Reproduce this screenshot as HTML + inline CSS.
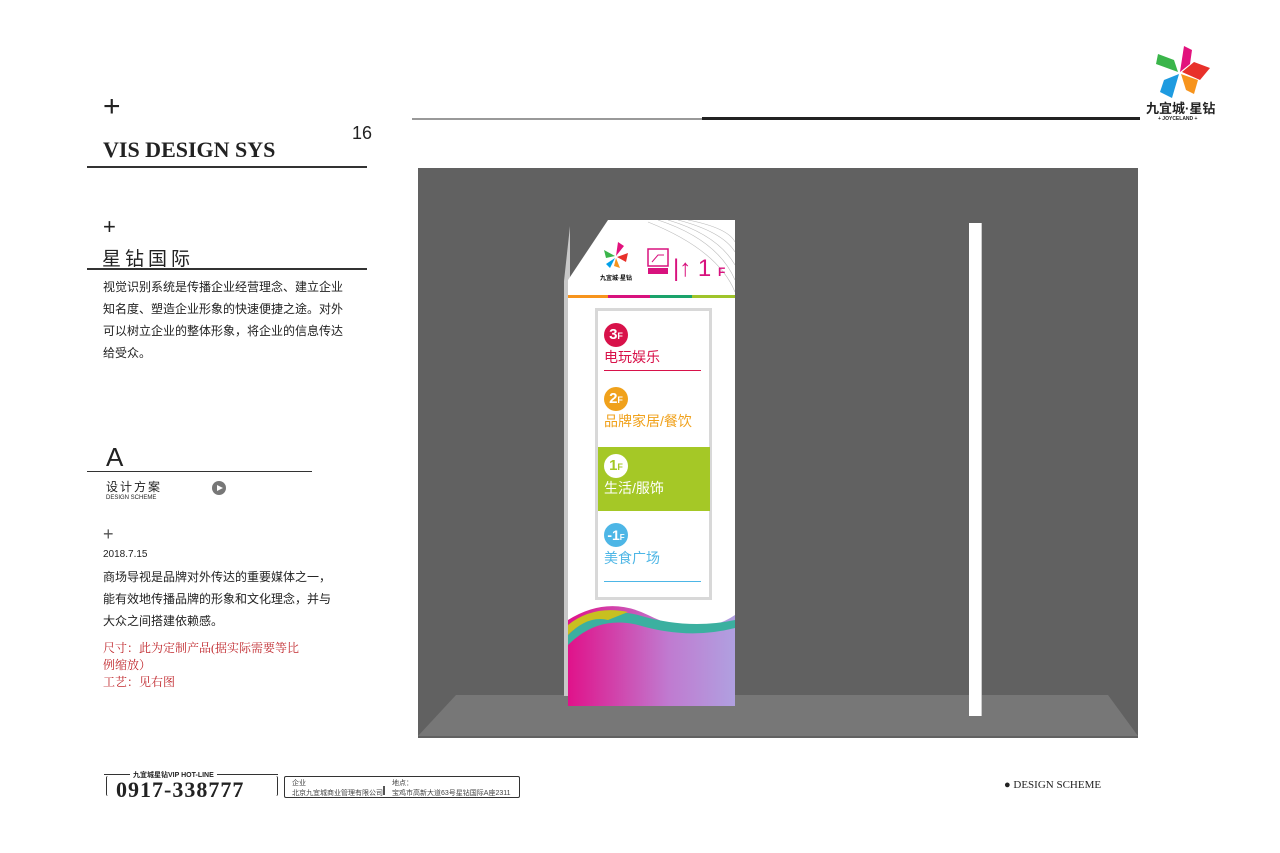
<!DOCTYPE html>
<html><head><meta charset="utf-8"><style>
body{margin:0;width:1280px;height:853px;background:#fff;position:relative;overflow:hidden;font-family:"Liberation Sans","Noto Sans CJK SC",sans-serif;color:#222}
.a{position:absolute}
.cn{font-family:"Liberation Sans","Noto Sans CJK SC",sans-serif}
.sr{font-family:"Liberation Serif","Noto Serif CJK SC",serif}
</style></head><body>
<div class="a" style="left:103px;top:92px;font-size:30px;line-height:30px">+</div>
<div class="a sr" style="left:103px;top:137px;font-size:22px;font-weight:bold">VIS DESIGN SYS</div>
<div class="a" style="left:352px;top:123px;font-size:18px">16</div>
<div class="a" style="left:87px;top:166px;width:280px;height:2px;background:#333"></div>
<div class="a" style="left:412px;top:118px;width:290px;height:2px;background:#999"></div>
<div class="a" style="left:702px;top:117px;width:438px;height:3px;background:#222"></div>
<svg class="a" style="left:1150px;top:42px" width="62" height="58" viewBox="0 0 62 58">
<polygon points="30,30 34,4 42,8 40,22" fill="#e2127d"/>
<polygon points="32,30 44,20 60,26 50,38" fill="#e8302a"/>
<polygon points="31,32 48,38 44,52 36,48" fill="#f7941d"/>
<polygon points="29,32 22,56 10,50 14,38" fill="#1e9be0"/>
<polygon points="28,30 6,22 8,12 24,18" fill="#3ab54a"/>
</svg>
<div class="a cn" style="left:1146px;top:98px;font-size:13px;font-weight:bold">九宜城·星钻</div>
<div class="a" style="left:1158px;top:116px;font-size:5px;font-weight:bold">+ JOYCELAND +</div>
<div class="a" style="left:103px;top:216px;font-size:22px;line-height:22px">+</div>
<div class="a cn" style="left:102px;top:244px;font-size:19px;letter-spacing:4px">星钻国际</div>
<div class="a" style="left:87px;top:268px;width:280px;height:2px;background:#333"></div>
<div class="a cn" style="left:103px;top:276px;font-size:12px;line-height:22px;width:242px">视觉识别系统是传播企业经营理念、建立企业知名度、塑造企业形象的快速便捷之途。对外可以树立企业的整体形象，将企业的信息传达给受众。</div>
<div class="a" style="left:106px;top:443px;font-size:26px;line-height:28px">A</div>
<div class="a" style="left:87px;top:471px;width:225px;height:1px;background:#333"></div>
<div class="a cn" style="left:106px;top:478px;font-size:12px;letter-spacing:2px">设计方案</div>
<div class="a" style="left:106px;top:495px;font-size:6px">DESIGN SCHEME</div>
<div class="a" style="left:212px;top:481px;width:14px;height:14px;border-radius:50%;background:#777"></div>
<div class="a" style="left:217px;top:485px;border-left:6px solid #fff;border-top:3px solid transparent;border-bottom:3px solid transparent"></div>
<div class="a" style="left:103px;top:525px;font-size:18px;line-height:18px;color:#555">+</div>
<div class="a" style="left:103px;top:549px;font-size:10px">2018.7.15</div>
<div class="a cn" style="left:103px;top:566px;font-size:12px;line-height:22px;width:232px">商场导视是品牌对外传达的重要媒体之一，能有效地传播品牌的形象和文化理念，并与大众之间搭建依赖感。</div>
<div class="a sr" style="left:103px;top:640px;font-size:12px;line-height:17px;color:#c0282d;width:202px">尺寸：此为定制产品(据实际需要等比例缩放）<br>工艺：见右图</div>

<div class="a" style="left:418px;top:168px;width:720px;height:570px;background:#616161"></div>
<svg class="a" style="left:418px;top:168px" width="720" height="570"><polygon points="38,527 690,527 720,568 0,568" fill="#777"/></svg>
<div class="a" style="left:969px;top:223px;width:12px;height:493px;background:#fff;box-shadow:1px 0 0 #ccc"></div>

<div class="a" style="left:564px;top:226px;width:6px;height:470px;background:#c8c8c8;clip-path:polygon(100% 0,100% 100%,0 100%,0 55px)"></div>
<div class="a" style="left:568px;top:220px;width:167px;height:486px;background:#fff;clip-path:polygon(40px 0,100% 0,100% 100%,0 100%,0 60px)"></div>
<svg class="a" style="left:568px;top:220px" width="167" height="486">
<g stroke="#bbb" fill="none" stroke-width=".6"><path d="M90,0 Q150,20 167,60"/><path d="M100,0 Q150,15 167,45"/><path d="M110,0 Q155,12 167,32"/><path d="M80,2 Q150,30 167,72"/><path d="M120,0 Q160,8 167,22"/></g>
<rect x="0" y="75" width="40" height="3" fill="#f7941d"/><rect x="40" y="75" width="42" height="3" fill="#d8127e"/><rect x="82" y="75" width="42" height="3" fill="#1aa36b"/><rect x="124" y="75" width="43" height="3" fill="#9fc42a"/>
<polygon points="48,36 50,22 56,26" fill="#e2127d"/><polygon points="49,37 60,33 58,42" fill="#e8302a"/><polygon points="48,38 52,48 46,46" fill="#f7941d"/><polygon points="47,38 42,48 38,44" fill="#00a0e9"/><polygon points="47,36 36,30 38,38" fill="#3ab54a"/>
<text x="32" y="60" font-size="6" font-family="Liberation Sans,Noto Sans CJK SC" font-weight="bold">九宜城·星钻</text>
<rect x="80" y="29" width="20" height="17" fill="none" stroke="#d8127e" stroke-width="1.5"/><path d="M84,42 L90,35 L96,35" stroke="#d8127e" fill="none"/><rect x="80" y="48" width="20" height="6" fill="#d8127e"/>
<text x="105" y="56" fill="#d8127e" font-size="24" font-family="Liberation Sans">|↑ 1</text><text x="150" y="56" fill="#d8127e" font-size="12" font-family="Liberation Sans" font-weight="bold">F</text>
<defs><linearGradient id="g" x1="0" y1="0" x2="1" y2="0"><stop offset="0" stop-color="#e0128a"/><stop offset=".6" stop-color="#c07ad0"/><stop offset="1" stop-color="#b0a0e0"/></linearGradient></defs>
<path d="M0,400 Q40,375 80,395 Q130,420 167,395 L167,486 L0,486Z" fill="url(#g)"/>
<path d="M0,415 Q30,385 70,395 Q120,410 167,400 L167,408 Q120,420 70,405 Q30,395 0,425Z" fill="#3bb0a0"/>
<path d="M0,405 Q25,385 60,392 L40,400 Q20,395 0,415Z" fill="#c8c020"/>
</svg>
<div class="a" style="left:595px;top:308px;width:111px;height:286px;border:3px solid #d8d8d8;background:#fff"></div>
<div class="a" style="left:598px;top:447px;width:112px;height:64px;background:#a5c826"></div>
<div class="a" style="left:604px;top:323px;width:24px;height:24px;border-radius:50%;background:#d8124a;color:#fff;font-size:15px;font-weight:bold;text-align:center;line-height:24px">3<small style="font-size:9px">F</small></div>
<div class="a cn" style="left:604px;top:347px;font-size:14px;color:#d8124a">电玩娱乐</div>
<div class="a" style="left:604px;top:370px;width:97px;height:1px;background:#d8124a"></div>
<div class="a" style="left:604px;top:387px;width:24px;height:24px;border-radius:50%;background:#f0a11b;color:#fff;font-size:15px;font-weight:bold;text-align:center;line-height:24px">2<small style="font-size:9px">F</small></div>
<div class="a cn" style="left:604px;top:411px;font-size:14px;color:#f0a11b;white-space:nowrap">品牌家居/餐饮</div>
<div class="a" style="left:604px;top:454px;width:24px;height:24px;border-radius:50%;background:#fff;color:#a5c826;font-size:15px;font-weight:bold;text-align:center;line-height:24px">1<small style="font-size:9px">F</small></div>
<div class="a cn" style="left:604px;top:478px;font-size:14px;color:#fff">生活/服饰</div>
<div class="a" style="left:604px;top:523px;width:24px;height:24px;border-radius:50%;background:#4db6e6;color:#fff;font-size:14px;font-weight:bold;text-align:center;line-height:24px">-1<small style="font-size:8px">F</small></div>
<div class="a cn" style="left:604px;top:548px;font-size:14px;color:#4db6e6">美食广场</div>
<div class="a" style="left:604px;top:581px;width:97px;height:1px;background:#4db6e6"></div>

<div class="a" style="left:106px;top:776px;width:170px;height:20px;border:1px solid #333;border-top:none;border-bottom:none;border-radius:2px"></div>
<div class="a" style="left:104px;top:774px;width:174px;height:1px;background:#333"></div>
<div class="a" style="left:130px;top:770px;background:#fff;padding:0 3px;font-size:7px;font-weight:bold">九宜城星钻VIP HOT-LINE</div>
<div class="a sr" style="left:116px;top:777px;font-size:22px;font-weight:bold;letter-spacing:1px">0917-338777</div>
<div class="a" style="left:284px;top:776px;width:234px;height:20px;border:1px solid #333;border-radius:2px"></div>
<div class="a cn" style="left:292px;top:779px;font-size:7px;line-height:10px;color:#444">企业<br>北京九宜城商业管理有限公司</div>
<div class="a" style="left:383px;top:786px;width:2px;height:9px;background:#555"></div>
<div class="a cn" style="left:392px;top:779px;font-size:7px;line-height:10px;color:#444">地点：<br>宝鸡市高新大道63号星钻国际A座2311</div>
<div class="a sr" style="left:1004px;top:779px;font-size:11px">● DESIGN SCHEME</div>
</body></html>
